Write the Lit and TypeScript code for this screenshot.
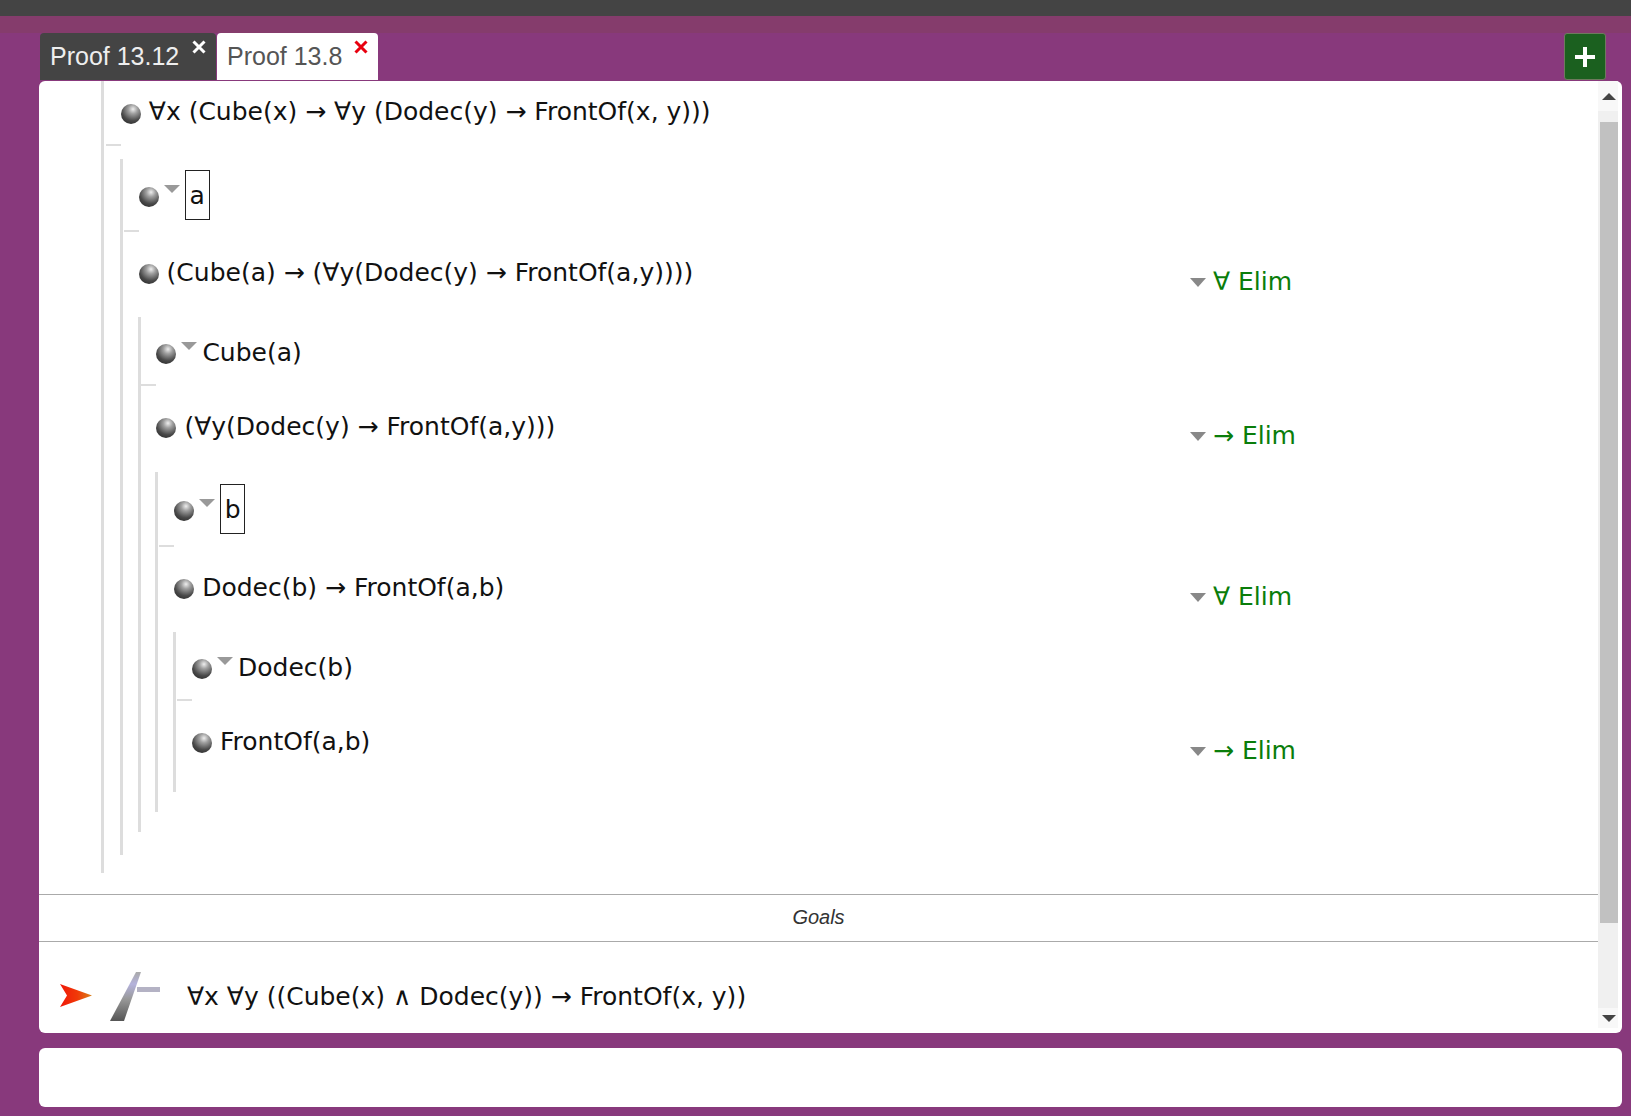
import { LitElement, html, css, svg } from "lit";
import { customElement } from "lit/decorators.js";

type Line = { text: string; kind?: "term" | "prem"; rule?: string };
type Sub = { level: number; prem: Line; body: (Line | Sub)[] };

const tree: Sub = {
  level: 0,
  prem: { text: "∀x (Cube(x) → ∀y (Dodec(y) → FrontOf(x, y)))" },
  body: [
    {
      level: 1,
      prem: { text: "a", kind: "term" },
      body: [
        { text: "(Cube(a) → (∀y(Dodec(y) → FrontOf(a,y))))", rule: "∀ Elim" },
        {
          level: 2,
          prem: { text: "Cube(a)", kind: "prem" },
          body: [
            { text: "(∀y(Dodec(y) → FrontOf(a,y)))", rule: "→ Elim" },
            {
              level: 3,
              prem: { text: "b", kind: "term" },
              body: [
                { text: "Dodec(b) → FrontOf(a,b)", rule: "∀ Elim" },
                {
                  level: 4,
                  prem: { text: "Dodec(b)", kind: "prem" },
                  body: [{ text: "FrontOf(a,b)", rule: "→ Elim" }],
                },
              ],
            },
          ],
        },
      ],
    },
  ],
};

const closeIcon = svg`<svg class="x" viewBox="0 0 14 14" width="14" height="14"><path d="M1.5 1.5 12.5 12.5M12.5 1.5 1.5 12.5" stroke="currentColor" stroke-width="3" fill="none"/></svg>`;

@customElement("app-root")
export class AppRoot extends LitElement {
  static styles = css`
    :host { display: block; height: 1116px; width: 1631px; overflow: hidden; background: #88397c; font-family: "DejaVu Sans", sans-serif; color: #111; }
    .top { height: 16px; background: #444; }
    .band { height: 17px; background: #853c6c; }
    .tabbar { display: flex; height: 47px; padding: 0 25px 0 40px; }
    .tab { display: flex; align-items: flex-start; height: 47px; box-sizing: border-box; padding: 0 0 0 10px; border-radius: 4px 4px 0 0; font: 25px/46px "Liberation Sans", Arial, sans-serif; position: relative; }
    .tab.dark { width: 176px; background: #444; color: #eee; margin-right: 1px; }
    .tab.light { width: 161px; background: #fff; color: #555; }
    .x { position: absolute; top: 7px; right: 10px; }
    .tab.dark .x { color: #fff; }
    .tab.light .x { color: #e8000f; }
    .plus { margin-left: auto; width: 42px; height: 47px; background: #1b601f; border: 1px solid #6e7a5e; box-sizing: border-box; border-radius: 3px; display: flex; align-items: center; justify-content: center; }
    .panel { margin: 1px 9px 0 39px; height: 952px; background: #fff; border-radius: 6px; display: flex; overflow: hidden; }
    .content { flex: 1; min-width: 0; display: flex; flex-direction: column; }
    .proof { height: 813px; padding-left: 62px; box-sizing: border-box; }
    .sub { border-left: 3px solid #ddd; padding-left: 15.8px; padding-bottom: 20px; margin-left: -1px; }
    .l0 { margin-left: 0; padding-left: 16.8px; padding-top: 2px; padding-bottom: 18px; }
    .l1 { margin-top: 13px; padding-top: 7px; padding-bottom: 23px; }
    .l2 { margin-top: 14px; padding-top: 6px; }
    .l3 { margin-top: 15px; padding-top: 8px; }
    .l4 { margin-top: 14px; padding-top: 6px; }
    .row { display: flex; height: 60px; align-items: center; font-size: 25px; white-space: nowrap; }
    .ball { width: 20px; height: 20px; border-radius: 50%; flex: none; background: radial-gradient(circle at 60% 26%, #eeeeee 0%, #a0a0a0 24%, #4a4a4a 60%, #1c1c1c 100%); margin-top: 2px; }
    .f { margin: 0 0 2px 8px; flex: 1; }
    .l0 > .row .f { margin-bottom: 4px; }
    .tri { width: 0; height: 0; border-left: 8px solid transparent; border-right: 8px solid transparent; border-top: 8px solid #999; flex: none; }
    .row > .tri { margin: -15px 0 0 5px; }
    .prem .f { margin-left: 5px; }
    .box { border: 1px solid #222; height: 50px; width: 25px; box-sizing: border-box; display: flex; align-items: center; justify-content: center; margin: -2px 0 0 5px; flex: none; }
    .rule { width: 408px; flex: none; align-self: center; margin-top: 16px; display: flex; align-items: center; gap: 7px; color: #0a7d0a; }
    .rule .tri { border-top-color: #888; border-left-width: 8.5px; border-right-width: 8.5px; border-top-width: 9px; margin-top: 2px; }
    .tick { width: 15px; height: 2px; background: #ddd; margin: 1px 0 11px -15px; }
    .tick.after-term { margin-top: 5px; }
    .l1 > .tick.after-term { margin-top: 4px; }
    .divider { height: 48px; border-top: 1px solid #aaa; border-bottom: 1px solid #aaa; box-sizing: border-box; padding-bottom: 2px; display: flex; align-items: center; justify-content: center; font: italic 20px "Liberation Sans", Arial, sans-serif; color: #333; }
    .goal { flex: 1; display: flex; align-items: center; font-size: 25px; white-space: nowrap; padding: 18px 0 0 21px; }
    .goal .f { margin: 0; }
    .arrow { width: 32px; height: 24px; flex: none; margin-bottom: 2px; }
    .turn { width: 52px; height: 52px; margin: 0 25px 0 18px; flex: none; }
    .bar { width: 20px; flex: none; margin-right: 4px; background: #f0f0f0; display: flex; flex-direction: column; height: 947px; }
    .btn { height: 30px; background: #f8f8f8; display: flex; align-items: center; justify-content: center; flex: none; padding-left: 2px; }
    .dnb { height: 20px; }
    .up { border-left: 7px solid transparent; border-right: 7px solid transparent; border-bottom: 7px solid #444; }
    .dn { border-left: 7px solid transparent; border-right: 7px solid transparent; border-top: 7px solid #444; }
    .track { flex: 1; padding: 11px 0 85px 2px; display: flex; }
    .thumb { flex: 1; background: #c1c1c1; }
    .input { margin: 15px 9px 0 39px; height: 59px; background: #fff; border-radius: 6px; }
  `;

  line(l: Line) {
    return html`<div class="row ${l.kind ?? ""}">
      <div class="ball"></div>
      ${l.kind ? html`<div class="tri"></div>` : ""}
      ${l.kind === "term" ? html`<div class="box">${l.text}</div><div class="f"></div>` : html`<div class="f">${l.text}</div>`}
      ${l.rule ? html`<div class="rule"><div class="tri"></div><span>${l.rule}</span></div>` : ""}
    </div>`;
  }

  sub(s: Sub): unknown {
    return html`<div class="sub l${s.level}">
      ${this.line(s.prem)}
      <div class="tick ${s.prem.kind === "term" ? "after-term" : ""}"></div>
      ${s.body.map((b) => ("level" in b ? this.sub(b) : this.line(b)))}
    </div>`;
  }

  render() {
    return html`
      <div class="top"></div>
      <div class="band"></div>
      <div class="tabbar">
        <div class="tab dark">Proof 13.12${closeIcon}</div>
        <div class="tab light">Proof 13.8${closeIcon}</div>
        <div class="plus"><svg width="22" height="22" viewBox="0 0 22 22"><path d="M11 1V21M1 11H21" stroke="#fff" stroke-width="4"/></svg></div>
      </div>
      <div class="panel">
        <div class="content">
          <div class="proof">${this.sub(tree)}</div>
          <div class="divider">Goals</div>
          <div class="goal">
            <svg class="arrow" viewBox="0 0 32 24">
              <defs><linearGradient id="ag" x1="0" x2="1" y1="0" y2="0"><stop offset="0" stop-color="#f01808"/><stop offset="0.55" stop-color="#f03a08"/><stop offset="1" stop-color="#d8821a"/></linearGradient></defs>
              <path d="M0 0 32 11.5 0 23 7 11.5Z" fill="url(#ag)"/>
            </svg>
            <svg class="turn" viewBox="0 0 52 52">
              <defs><linearGradient id="tg" x1="0" x2="0" y1="1" y2="0"><stop offset="0" stop-color="#555"/><stop offset="0.45" stop-color="#999"/><stop offset="0.75" stop-color="#b4b2dc"/><stop offset="1" stop-color="#aaa"/></linearGradient></defs>
              <path d="M0 50H14L31 1H26Z" fill="url(#tg)"/>
              <rect x="27" y="16" width="23" height="5" fill="#b4b2c4"/>
            </svg>
            <div class="f">∀x ∀y ((Cube(x) ∧ Dodec(y)) → FrontOf(x, y))</div>
          </div>
        </div>
        <div class="bar">
          <div class="btn"><div class="up"></div></div>
          <div class="track"><div class="thumb"></div></div>
          <div class="btn dnb"><div class="dn"></div></div>
        </div>
      </div>
      <div class="input"></div>
    `;
  }
}
